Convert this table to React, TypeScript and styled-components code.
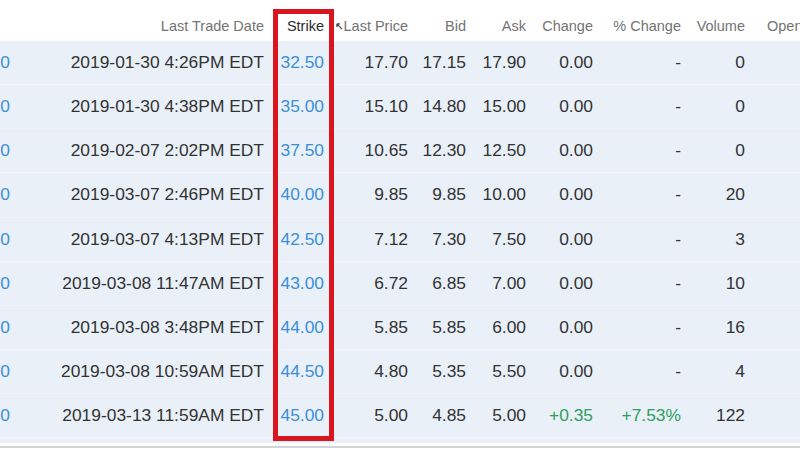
import styled, { createGlobalStyle } from 'styled-components';

const GlobalStyle = createGlobalStyle`
  html, body {
    margin: 0;
    padding: 0;
    background: #ffffff;
    overflow: hidden;
  }
  body {
    font-family: 'Liberation Sans', Arial, sans-serif;
  }
`;

const COLS = '10px 254px 60px 84px 58px 60px 67px 88px 64px 117px';

const Page = styled.div`
  position: relative;
  width: 800px;
  height: 450px;
  overflow: hidden;
  background: #ffffff;
`;

const Table = styled.div`
  display: flex;
  flex-direction: column;
  width: 862px;
`;

const HeadRow = styled.div`
  display: grid;
  grid-template-columns: ${COLS};
  height: 41px;
  align-items: center;
  padding-top: 10px;
  box-sizing: border-box;
  background: #ffffff;
`;

const HeadCell = styled.div<{ $sorted?: boolean; $left?: boolean }>`
  font-size: 14.5px;
  color: ${(p) => (p.$sorted ? '#2b2b2b' : '#737373')};
  text-align: ${(p) => (p.$left ? 'left' : 'right')};
  padding-left: ${(p) => (p.$left ? '22px' : '0')};
  white-space: nowrap;
  position: relative;
`;

const Body = styled.div`
  background: #e9f0f8;
  padding-bottom: 5px;
  border-bottom: 3px solid #ffffff;
  box-shadow: 0 2px 0 #d2d4d6;
`;

const Row = styled.div`
  display: grid;
  grid-template-columns: ${COLS};
  height: 44.125px;
  align-items: center;
  border-bottom: 1px solid #f1f5fa;
  box-sizing: border-box;
`;

const Cell = styled.div<{ $tone?: 'link' | 'up' | 'plain' }>`
  font-size: 17.4px;
  text-align: right;
  white-space: nowrap;
  color: ${(p) =>
    p.$tone === 'link' ? '#3b8fd8' : p.$tone === 'up' ? '#2f9e5e' : '#333333'};
`;

const SortArrow = styled.svg`
  position: absolute;
  right: -19px;
  top: 5px;
`;

const Highlight = styled.div`
  position: absolute;
  left: 273px;
  top: 9px;
  width: 61px;
  height: 432px;
  border: 5px solid #d9161f;
  box-sizing: border-box;
  pointer-events: none;
`;

type Option = {
  date: string;
  strike: string;
  last: string;
  bid: string;
  ask: string;
  change: string;
  pct: string;
  volume: string;
};

const rows: Option[] = [
  { date: '2019-01-30 4:26PM EDT', strike: '32.50', last: '17.70', bid: '17.15', ask: '17.90', change: '0.00', pct: '-', volume: '0' },
  { date: '2019-01-30 4:38PM EDT', strike: '35.00', last: '15.10', bid: '14.80', ask: '15.00', change: '0.00', pct: '-', volume: '0' },
  { date: '2019-02-07 2:02PM EDT', strike: '37.50', last: '10.65', bid: '12.30', ask: '12.50', change: '0.00', pct: '-', volume: '0' },
  { date: '2019-03-07 2:46PM EDT', strike: '40.00', last: '9.85', bid: '9.85', ask: '10.00', change: '0.00', pct: '-', volume: '20' },
  { date: '2019-03-07 4:13PM EDT', strike: '42.50', last: '7.12', bid: '7.30', ask: '7.50', change: '0.00', pct: '-', volume: '3' },
  { date: '2019-03-08 11:47AM EDT', strike: '43.00', last: '6.72', bid: '6.85', ask: '7.00', change: '0.00', pct: '-', volume: '10' },
  { date: '2019-03-08 3:48PM EDT', strike: '44.00', last: '5.85', bid: '5.85', ask: '6.00', change: '0.00', pct: '-', volume: '16' },
  { date: '2019-03-08 10:59AM EDT', strike: '44.50', last: '4.80', bid: '5.35', ask: '5.50', change: '0.00', pct: '-', volume: '4' },
  { date: '2019-03-13 11:59AM EDT', strike: '45.00', last: '5.00', bid: '4.85', ask: '5.00', change: '+0.35', pct: '+7.53%', volume: '122' },
];

export default function App() {
  return (
    <Page>
      <GlobalStyle />
      <Table>
        <HeadRow>
          <HeadCell />
          <HeadCell>Last Trade Date</HeadCell>
          <HeadCell $sorted>
            Strike
            <SortArrow width='7' height='7' viewBox='0 0 8 8'>
              <path d='M1 1 L7 7 M1 1 L1 4.5 M1 1 L4.5 1' stroke='#444' strokeWidth='1.3' fill='none' />
            </SortArrow>
          </HeadCell>
          <HeadCell>Last Price</HeadCell>
          <HeadCell>Bid</HeadCell>
          <HeadCell>Ask</HeadCell>
          <HeadCell>Change</HeadCell>
          <HeadCell>% Change</HeadCell>
          <HeadCell>Volume</HeadCell>
          <HeadCell $left>Open Interest</HeadCell>
        </HeadRow>
        <Body>
          {rows.map((r) => {
            const up = r.change.startsWith('+');
            return (
              <Row key={r.strike}>
                <Cell $tone='link'>0</Cell>
                <Cell>{r.date}</Cell>
                <Cell $tone='link'>{r.strike}</Cell>
                <Cell>{r.last}</Cell>
                <Cell>{r.bid}</Cell>
                <Cell>{r.ask}</Cell>
                <Cell $tone={up ? 'up' : 'plain'}>{r.change}</Cell>
                <Cell $tone={up ? 'up' : 'plain'}>{r.pct}</Cell>
                <Cell>{r.volume}</Cell>
                <Cell />
              </Row>
            );
          })}
        </Body>
      </Table>
      <Highlight />
    </Page>
  );
}
